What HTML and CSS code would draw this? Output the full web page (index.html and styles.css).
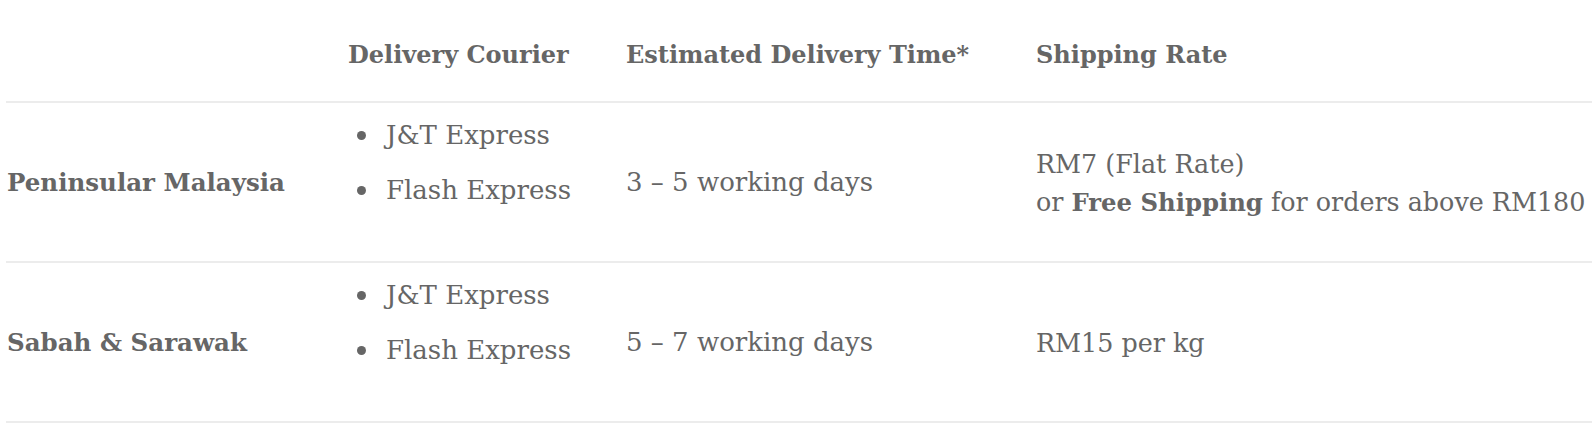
FILE: index.html
```html
<!DOCTYPE html>
<html lang="en">
<head>
<meta charset="utf-8">
<title>Shipping Rates</title>
<link rel="stylesheet" href="styles.css">
</head>
<body>
<div class="wrap">
<table class="ship">
  <colgroup>
    <col class="c1"><col class="c2"><col class="c3"><col class="c4">
  </colgroup>
  <thead>
    <tr>
      <th></th>
      <th>Delivery Courier</th>
      <th>Estimated Delivery Time*</th>
      <th>Shipping Rate</th>
    </tr>
  </thead>
  <tbody>
    <tr>
      <th class="region">Peninsular Malaysia</th>
      <td><ul class="couriers"><li>J&amp;T Express</li><li>Flash Express</li></ul></td>
      <td>3 – 5 working days</td>
      <td class="rate">RM7 (Flat Rate)<br>or <strong>Free Shipping</strong> for orders above RM180</td>
    </tr>
    <tr>
      <th class="region">Sabah &amp; Sarawak</th>
      <td><ul class="couriers"><li>J&amp;T Express</li><li>Flash Express</li></ul></td>
      <td>5 – 7 working days</td>
      <td class="rate">RM15 per kg</td>
    </tr>
  </tbody>
</table>
</div>
</body>
</html>
```

FILE: styles.css
```css
html, body {
  margin: 0;
  padding: 0;
  background: #fff;
  overflow: hidden;
}
.wrap {
  padding-left: 6px;
  width: 1700px;
}
.ship {
  border-collapse: collapse;
  table-layout: fixed;
  width: 1700px;
  font-family: "DejaVu Serif", "Liberation Serif", serif;
  font-size: 26px;
  line-height: 38px;
  color: #666;
}
.c1 { width: 330px; }
.c2 { width: 278px; }
.c3 { width: 410px; }
.c4 { width: auto; }
.ship th, .ship td {
  text-align: left;
  vertical-align: middle;
  padding: 0 0 0 12px;
  border-bottom: 2px solid #ececec;
}
.ship thead th {
  height: 93px;
  padding-top: 8px;
  font-size: 24px;
  font-weight: 600;
}
.ship tbody tr { height: 160px; }
.ship th.region {
  padding-left: 1px;
  padding-top: 2px;
  font-size: 24.5px;
  font-weight: 600;
}
.ship td.rate {
  font-size: 25.4px;
  padding-top: 2px;
}
.ship strong {
  font-size: 24.3px;
  font-weight: 600;
}
.couriers {
  list-style: none;
  margin: 0 0 39px;
  padding: 0;
  display: flex;
  flex-direction: column;
  gap: 17px;
}
.couriers li {
  display: flex;
  align-items: center;
}
.couriers li::before {
  content: "";
  width: 9px;
  height: 9px;
  border-radius: 50%;
  background: #666;
  margin-left: 9px;
  margin-right: 20px;
  flex: none;
}
```
